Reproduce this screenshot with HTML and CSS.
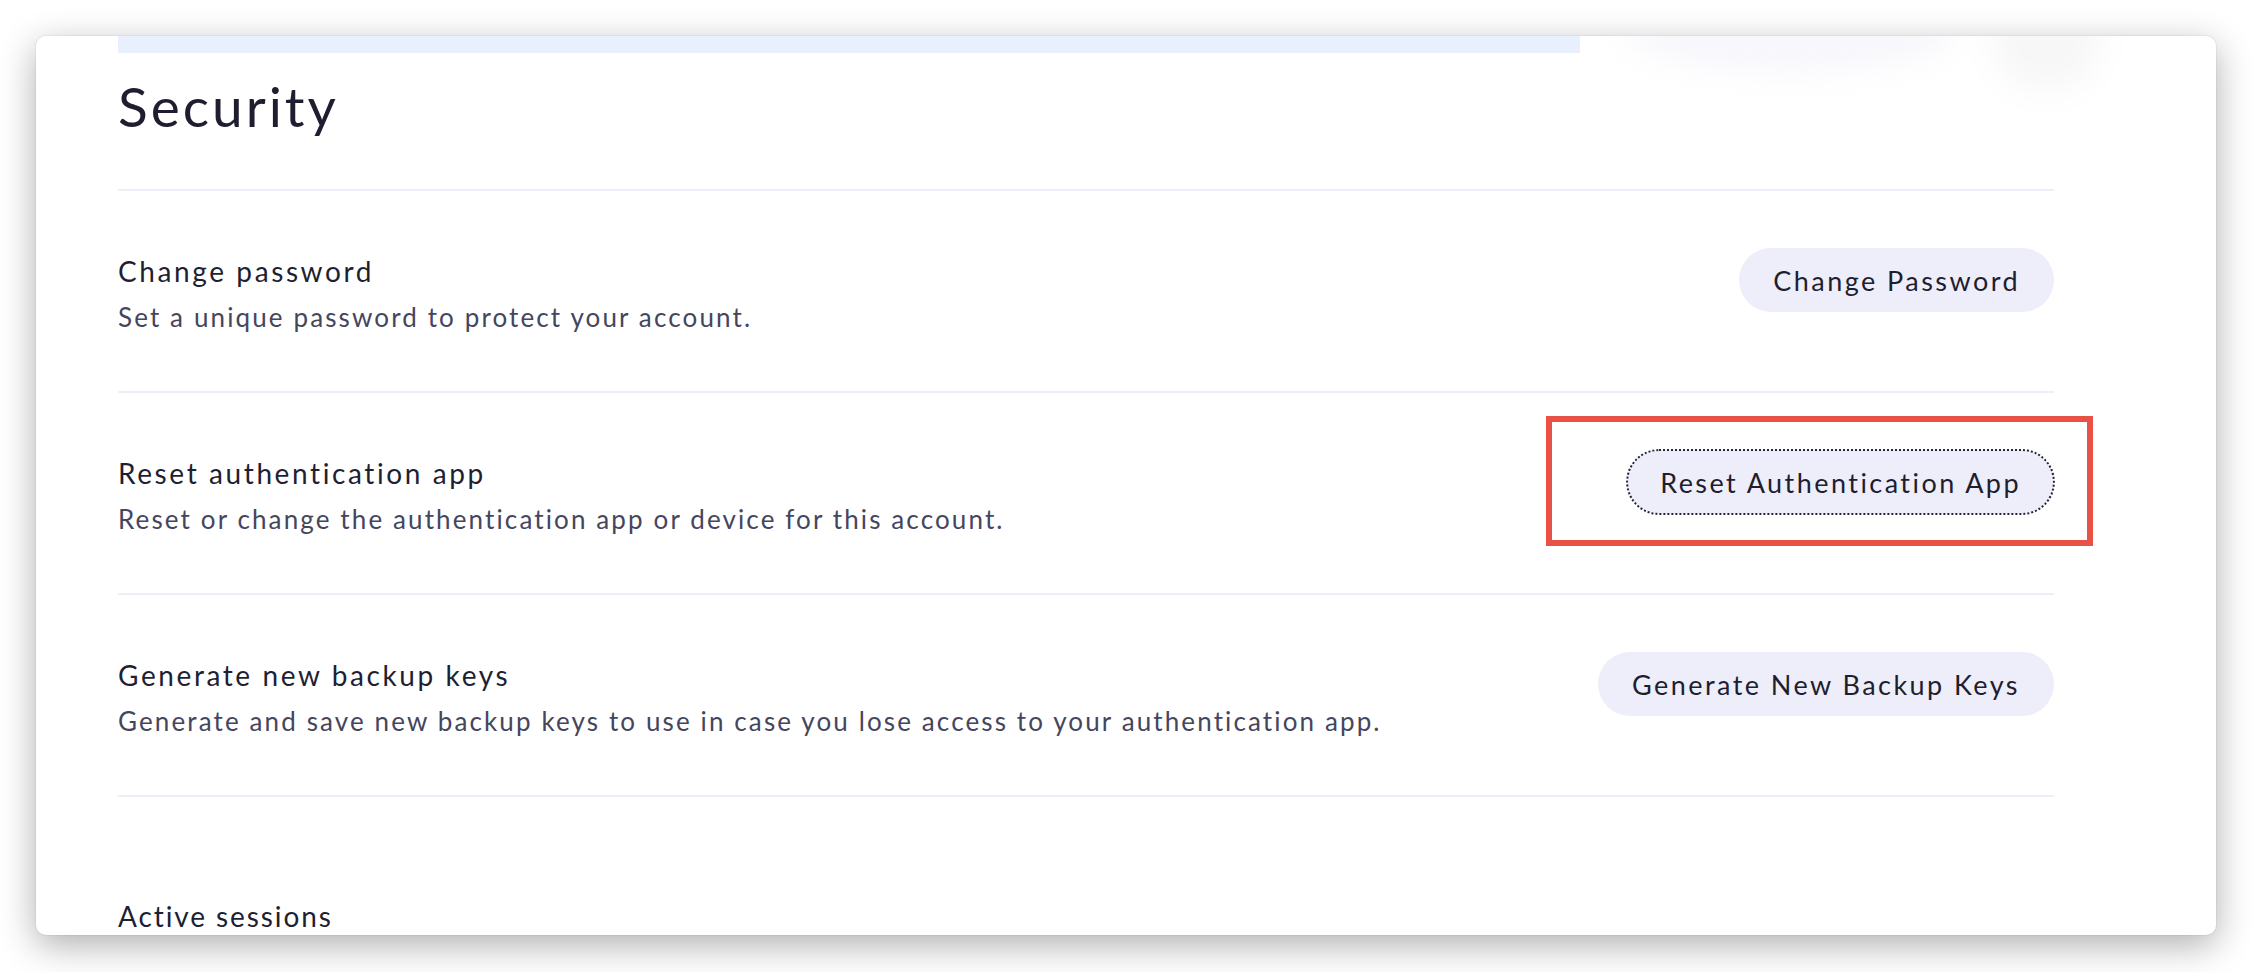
FILE: index.html
```html
<!DOCTYPE html>
<html lang="en">
<head>
<meta charset="utf-8">
<title>Security</title>
<link rel="stylesheet" href="styles.css">
</head>
<body>
<div class="window">
  <div class="ghost ghost-a"></div>
  <div class="ghost ghost-b"></div>
  <div class="content">
    <div class="banner-strip"></div>
    <header class="section-head">
      <h1 class="section-title">Security</h1>
    </header>
    <div class="row">
      <div class="row-text">
        <div class="row-title">Change password</div>
        <div class="row-desc">Set a unique password to protect your account.</div>
      </div>
      <button class="pill-btn">Change Password</button>
    </div>
    <div class="row">
      <div class="row-text">
        <div class="row-title">Reset authentication app</div>
        <div class="row-desc">Reset or change the authentication app or device for this account.</div>
      </div>
      <div class="btn-wrap">
        <button class="pill-btn focused">Reset Authentication App</button>
        <div class="highlight"></div>
      </div>
    </div>
    <div class="row">
      <div class="row-text">
        <div class="row-title">Generate new backup keys</div>
        <div class="row-desc">Generate and save new backup keys to use in case you lose access to your authentication app.</div>
      </div>
      <button class="pill-btn">Generate New Backup Keys</button>
    </div>
    <div class="sub-section">
      <div class="row-title sub-title">Active sessions</div>
    </div>
  </div>
</div>
</body>
</html>
```
FILE: styles.css
```css
html, body {
  margin: 0;
  padding: 0;
  background: #ffffff;
}
body {
  width: 2252px;
  height: 972px;
  overflow: hidden;
  font-family: "Lato", "Open Sans", sans-serif;
  color: #1f1f33;
}
.window {
  position: relative;
  margin: 36px 0 0 36px;
  width: 2180px;
  height: 899px;
  background: #ffffff;
  border-radius: 10px;
  overflow: hidden;
  box-shadow: 0 10px 36px rgba(0, 0, 0, 0.32), 0 0 0 1px rgba(0, 0, 0, 0.04);
}
.ghost {
  position: absolute;
  pointer-events: none;
  border-radius: 50%;
  filter: blur(16px);
}
.ghost-a {
  left: 1590px;
  top: -45px;
  width: 330px;
  height: 80px;
  background: rgba(230, 230, 244, 0.3);
}
.ghost-b {
  left: 1955px;
  top: -45px;
  width: 110px;
  height: 100px;
  background: rgba(0, 0, 0, 0.03);
}
.content {
  padding: 0 162px 0 82px;
}
.banner-strip {
  width: 1462px;
  height: 17px;
  background: #e8f0fd;
}
.section-head {
  padding: 20px 0 50px;
  border-bottom: 2px solid #eeeef9;
}
.section-title {
  margin: 0;
  font-size: 55px;
  line-height: 66px;
  font-weight: 400;
  letter-spacing: 3px;
  color: #1e1e30;
}
.row {
  display: flex;
  justify-content: space-between;
  align-items: flex-start;
  padding: 58px 0 52px;
  border-bottom: 2px solid #eeeef9;
}
.row-title {
  font-size: 28px;
  line-height: 44px;
  letter-spacing: 2.6px;
  color: #1f1f33;
}
.row-desc {
  margin-top: 2px;
  font-size: 26px;
  line-height: 44px;
  letter-spacing: 2.12px;
  color: #45465e;
}
.btn-wrap {
  position: relative;
}
.pill-btn {
  display: block;
  margin-top: -1px;
  height: 64px;
  padding: 0 34px;
  border: none;
  border-radius: 32px;
  background: #eeeefa;
  font-family: "Lato", "Open Sans", sans-serif;
  font-size: 27px;
  letter-spacing: 2.45px;
  color: #1e1e30;
}
.btn-wrap .pill-btn {
  padding: 0 33px;
}
.pill-btn.focused {
  outline: 2px dotted #23233a;
  outline-offset: -1px;
}
.highlight {
  position: absolute;
  left: -81px;
  top: -35px;
  right: -39px;
  bottom: -32px;
  border: 6px solid #ea5146;
  box-shadow: 0 0 0 2px rgba(255, 255, 255, 0.8);
  pointer-events: none;
}
.sub-section {
  padding-top: 97px;
}
.sub-title {
  letter-spacing: 1.9px;
}
```
